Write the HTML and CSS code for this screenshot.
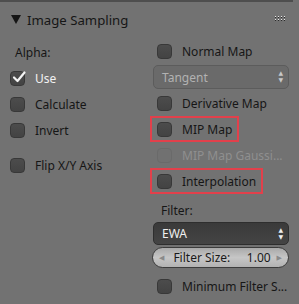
FILE: index.html
```html
<!DOCTYPE html>
<html lang="en">
<head>
  <meta charset="UTF-8" />
  <title>Image Sampling</title>
  <link rel="stylesheet" href="styles.css">
</head>
<body>
  <div class="panel">
    <div class="head">
      <svg class="tri" width="10" height="9" viewBox="0 0 10 9"><path d="M0 0 H10 L5 9 Z" fill="#151515"/></svg>
      <span class="title">Image Sampling</span>
      <svg class="grip" width="11" height="6" viewBox="0 0 11 6">
        <g fill="#e8e8e8"><rect x="0" y="0" width="1" height="1"/><rect x="3" y="0" width="1" height="1"/><rect x="6" y="0" width="1" height="1"/><rect x="9" y="0" width="1" height="1"/><rect x="0" y="3" width="1" height="1"/><rect x="3" y="3" width="1" height="1"/><rect x="6" y="3" width="1" height="1"/><rect x="9" y="3" width="1" height="1"/></g>
        <g fill="#2a2a2a"><rect x="0" y="1" width="1" height="1"/><rect x="3" y="1" width="1" height="1"/><rect x="6" y="1" width="1" height="1"/><rect x="9" y="1" width="1" height="1"/><rect x="0" y="4" width="1" height="1"/><rect x="3" y="4" width="1" height="1"/><rect x="6" y="4" width="1" height="1"/><rect x="9" y="4" width="1" height="1"/></g>
      </svg>
    </div>

    <div class="cols">
      <div class="col left">
        <div class="row label">Alpha:</div>
        <div class="row check on">
          <span class="box"><svg width="16" height="15" viewBox="0 0 16 15"><path d="M3 7.5 L6.5 11 L13.5 2.5" fill="none" stroke="#f4f4f4" stroke-width="2.2" stroke-linecap="round" stroke-linejoin="round"/></svg></span>
          <span>Use</span>
        </div>
        <div class="row check"><span class="box"></span><span>Calculate</span></div>
        <div class="row check"><span class="box"></span><span>Invert</span></div>
        <div class="row check gap"><span class="box"></span><span>Flip X/Y Axis</span></div>
      </div>

      <div class="col right">
        <div class="row check"><span class="box"></span><span>Normal Map</span></div>
        <div class="row">
          <div class="menu dim"><span>Tangent</span><span class="arrows">&#9650;<br>&#9660;</span></div>
        </div>
        <div class="row check"><span class="box"></span><span>Derivative Map</span></div>
        <div class="row check mark"><span class="box"></span><span>MIP Map</span></div>
        <div class="row check off"><span class="box"></span><span>MIP Map Gaussi...</span></div>
        <div class="row check mark"><span class="box"></span><span>Interpolation</span></div>
        <div class="row label filter">Filter:</div>
        <div class="menu dark"><span>EWA</span><span class="arrows">&#9650;<br>&#9660;</span></div>
        <div class="slider">
          <span class="tip">&#9664;</span>
          <span class="name">Filter Size:</span>
          <span class="val">1.00</span>
          <span class="tip">&#9654;</span>
        </div>
        <div class="row check last"><span class="box"></span><span>Minimum Filter S...</span></div>
      </div>
    </div>
  </div>
</body>
</html>
```

FILE: styles.css
```css
body {
  margin: 0;
  background-color: #727272;
  font-family: "Noto Sans", "DejaVu Sans", sans-serif;
  font-size: 12px;
  color: #161616;
}
.panel {
  width: 299px;
  height: 304px;
  background-color: #727272;
  overflow: hidden;
  white-space: nowrap;
}
.head {
  width: 293px;
  height: 36px;
  border-top: 2px solid #4e4e4e;
  display: flex;
  align-items: center;
}
.tri {
  margin-left: 11px;
  margin-top: -1px;
}
.title {
  margin-left: 6px;
  font-size: 13.2px;
  color: #161616;
}
.grip {
  margin-left: auto;
  margin-right: 7px;
  margin-top: -3px;
}
.cols {
  display: flex;
}
.col {
  display: flex;
  flex-direction: column;
}
.left {
  width: 140px;
  padding-left: 10px;
  padding-top: 1px;
}
.right {
  width: 140px;
}
.row {
  height: 26px;
  display: flex;
  align-items: center;
  box-sizing: border-box;
}
.label {
  padding-left: 5px;
}
.right .check {
  padding-left: 7px;
}
.box {
  width: 15px;
  height: 15px;
  box-sizing: border-box;
  border: 1px solid #383838;
  border-radius: 4px;
  background: linear-gradient(#4c4c4c, #434343);
  margin-right: 10px;
  flex-shrink: 0;
  position: relative;
}
.box svg {
  position: absolute;
  left: 0;
  top: -2px;
}
.on {
  color: #f2f2f2;
}
.off {
  color: #8f8f8f;
}
.off .box {
  background: #717171;
  border-color: #6a6a6a;
}
.gap {
  margin-top: 9px;
}
.mark {
  align-self: flex-start;
  border: 2px solid #e2404b;
  padding-right: 5px;
}
.right .mark {
  padding-left: 5px;
}
.filter {
  height: 24px;
  margin-top: 4px;
  padding-left: 11px;
}
.menu {
  height: 24px;
  box-sizing: border-box;
  margin: 0 1px 0 3px;
  width: 136px;
  border-radius: 5px;
  display: flex;
  align-items: center;
  padding-left: 8px;
  padding-right: 5px;
}
.menu .arrows {
  margin-left: auto;
  font-size: 6px;
  line-height: 7px;
  text-align: center;
}
.dim {
  background: #6a6a6a;
  border: 1px solid #5c5c5c;
  color: #b2b2b2;
}
.dim .arrows {
  color: #c8c8c8;
}
.dark {
  height: 23px;
  background: linear-gradient(#3a3a3a, #444444);
  border: 1px solid #2e2e2e;
  color: #f0f0f0;
}
.slider {
  margin: 2px 1px 0 2px;
  width: 137px;
  height: 21px;
  box-sizing: border-box;
  border: 1px solid #3c3c3c;
  border-radius: 11px;
  background: linear-gradient(#a9a9a9, #c6c6c6 50%, #b2b2b2);
  display: flex;
  align-items: center;
  padding: 0 6px;
  color: #1a1a1a;
}
.slider .tip {
  font-size: 7px;
  color: #8a8a8a;
}
.slider .name {
  margin-left: 9px;
}
.slider .val {
  margin-left: auto;
  margin-right: 6px;
}
.last {
  margin-top: 5px;
}
```
